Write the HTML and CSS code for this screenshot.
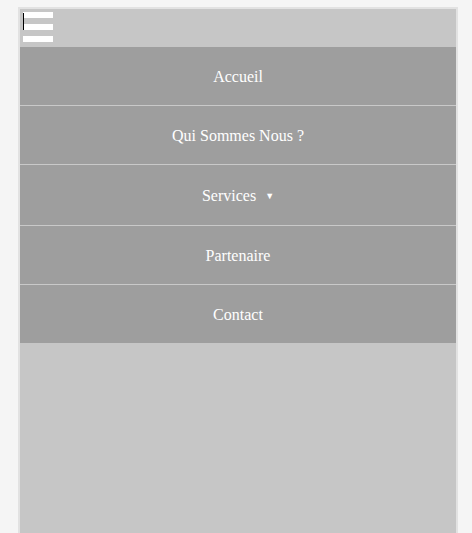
FILE: index.html
```html
<!DOCTYPE html>
<html lang="fr">
<head>
<meta charset="utf-8">
<title>Menu</title>
<link rel="stylesheet" href="styles.css">
</head>
<body>
<div class="page">
  <header class="topbar">
    <button class="burger" aria-label="Menu">
      <span class="caret"></span>
      <span class="bar"></span>
      <span class="bar"></span>
      <span class="bar"></span>
    </button>
  </header>
  <nav class="menu">
    <a class="item" href="#">Accueil</a>
    <a class="item" href="#">Qui Sommes Nous ?</a>
    <a class="item item-services" href="#">Services <span class="arrow">▼</span></a>
    <a class="item" href="#">Partenaire</a>
    <a class="item" href="#">Contact</a>
  </nav>
</div>
</body>
</html>
```

FILE: styles.css
```css
html, body {
  margin: 0;
  padding: 0;
  background: #f5f5f5;
  font-family: "Liberation Serif", "Times New Roman", serif;
  height: 100%;
}
body {
  padding: 7px 0 0 18px;
  box-sizing: border-box;
}
.page {
  width: 436px;
  min-height: 540px;
  border: 2px solid #e2e2e2;
  background: #c6c6c6;
}
.topbar {
  height: 38px;
  display: flex;
  align-items: flex-start;
}
.burger {
  position: relative;
  margin: 3px 0 0 3px;
  padding: 0;
  border: 0;
  background: none;
  display: flex;
  flex-direction: column;
  gap: 6px;
  cursor: pointer;
}
.bar {
  display: block;
  width: 30px;
  height: 6px;
  background: #ffffff;
}
.caret {
  position: absolute;
  left: 0;
  top: 1px;
  width: 1px;
  height: 17px;
  background: #000;
}
.menu {
  display: flex;
  flex-direction: column;
  background: #9e9e9e;
}
.item {
  display: block;
  text-align: center;
  color: #ffffff;
  text-decoration: none;
  font-size: 16px;
  line-height: 18px;
  padding: 21px 0 19px;
  border-top: 1px solid #c9c9c9;
}
.item:first-child {
  border-top: 0;
}
.item-services {
  padding: 22px 0 20px;
}
.arrow {
  font-size: 9px;
  vertical-align: 2px;
  margin-left: 5px;
}
```
